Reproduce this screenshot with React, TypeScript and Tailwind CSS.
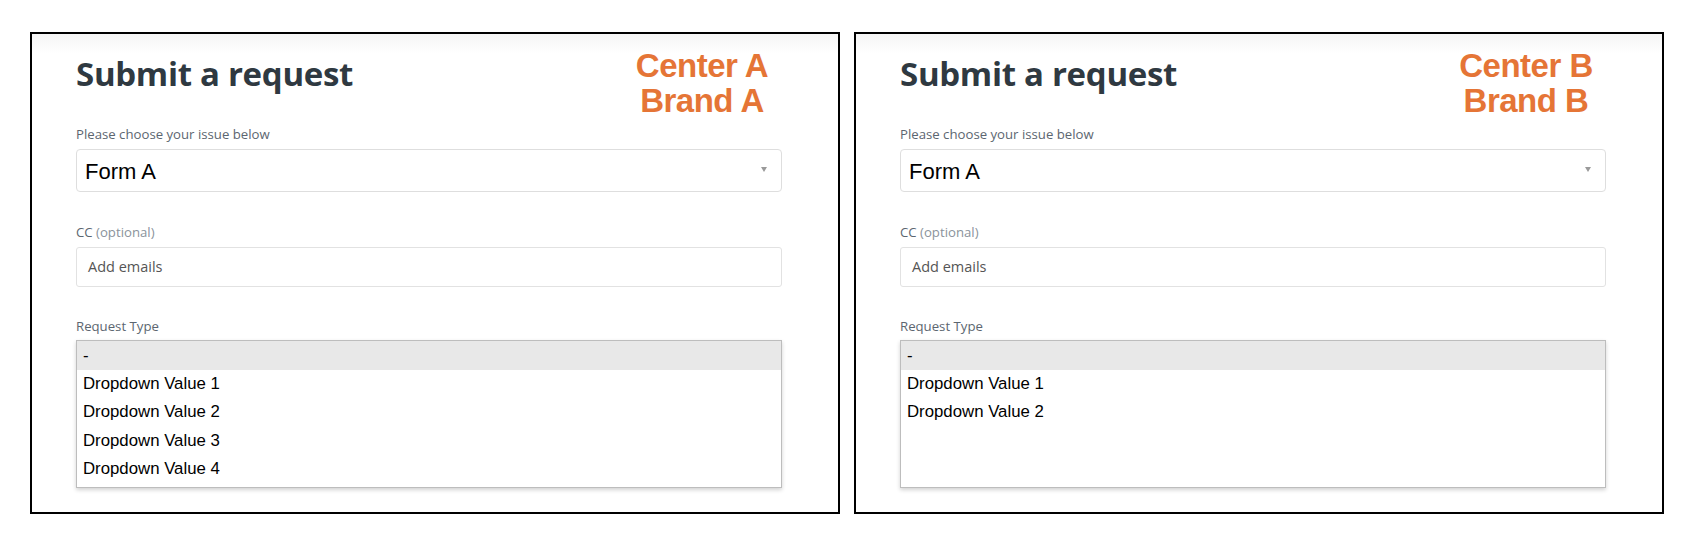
import React from "react";

const sans = { fontFamily: '"Open Sans", "Noto Sans", sans-serif' };

function Panel({ center, brand, options }: { center: string; brand: string; options: string[] }) {
  return (
    <div className="w-[810px] h-[482px] shrink-0 border-2 border-black bg-linear-to-b from-[#f5f5f5] to-white to-4%">
      <div className="pl-[44px] pt-[14px] w-[750px]">
        <div className="flex justify-between items-start h-[77px]">
          <h1
            className="mt-[6px] text-[33px] leading-[40px] font-bold text-[#2f3941] tracking-[-0.3px]"
            style={sans}
          >
            Submit a request
          </h1>
          <div className="w-[160px] text-center text-[33px] leading-[35px] font-bold tracking-[-0.5px] text-[#e57536] font-['Liberation_Sans',Arial,sans-serif]">
            <div>{center}</div>
            <div>{brand}</div>
          </div>
        </div>

        <label className="block text-[13.2px] leading-[18px] text-[#5c6670]" style={sans}>
          Please choose your issue below
        </label>
        <div className="mt-[6px] h-[43px] w-[706px] rounded-[4px] border border-[#dedede] bg-white flex items-center pl-[8px] pr-[14px] pt-[2px]">
          <span className="flex-1 text-[22px] text-black font-['Liberation_Sans',Arial,sans-serif]">Form A</span>
          <svg width="6" height="5" viewBox="0 0 6 5" className="mb-[4px]">
            <path d="M0 0 L6 0 L3 5 Z" fill="#9a9a9a" />
          </svg>
        </div>

        <label className="block mt-[31px] text-[13.2px] leading-[18px] text-[#5c6670]" style={sans}>
          CC <span className="text-[#8a939b]">(optional)</span>
        </label>
        <div className="mt-[6px] h-[40px] w-[706px] rounded-[3px] border border-[#e2e2e2] bg-white flex items-center pl-[11px]">
          <span className="text-[14.5px] text-[#555]" style={sans}>Add emails</span>
        </div>

        <label className="block mt-[30px] text-[13.2px] leading-[18px] text-[#5c6670]" style={sans}>
          Request Type
        </label>
        <div className="mt-[5px] h-[148px] w-[706px] border border-[#bdbdbd] bg-white shadow-[0_2px_4px_rgba(0,0,0,0.18)] font-['Liberation_Sans',Arial,sans-serif] text-[16.8px] text-black">
          <div className="h-[29px] leading-[29px] bg-[#e8e8e8] pl-[6px]">-</div>
          {options.map((o) => (
            <div key={o} className="h-[28.4px] leading-[28.4px] pl-[6px]">
              {o}
            </div>
          ))}
        </div>
      </div>
    </div>
  );
}

export default function App() {
  return (
    <div className="w-[1683px] h-[533px] bg-white flex gap-[14px] pl-[30px] pt-[32px]">
      <Panel
        center="Center A"
        brand="Brand A"
        options={["Dropdown Value 1", "Dropdown Value 2", "Dropdown Value 3", "Dropdown Value 4"]}
      />
      <Panel center="Center B" brand="Brand B" options={["Dropdown Value 1", "Dropdown Value 2"]} />
    </div>
  );
}
